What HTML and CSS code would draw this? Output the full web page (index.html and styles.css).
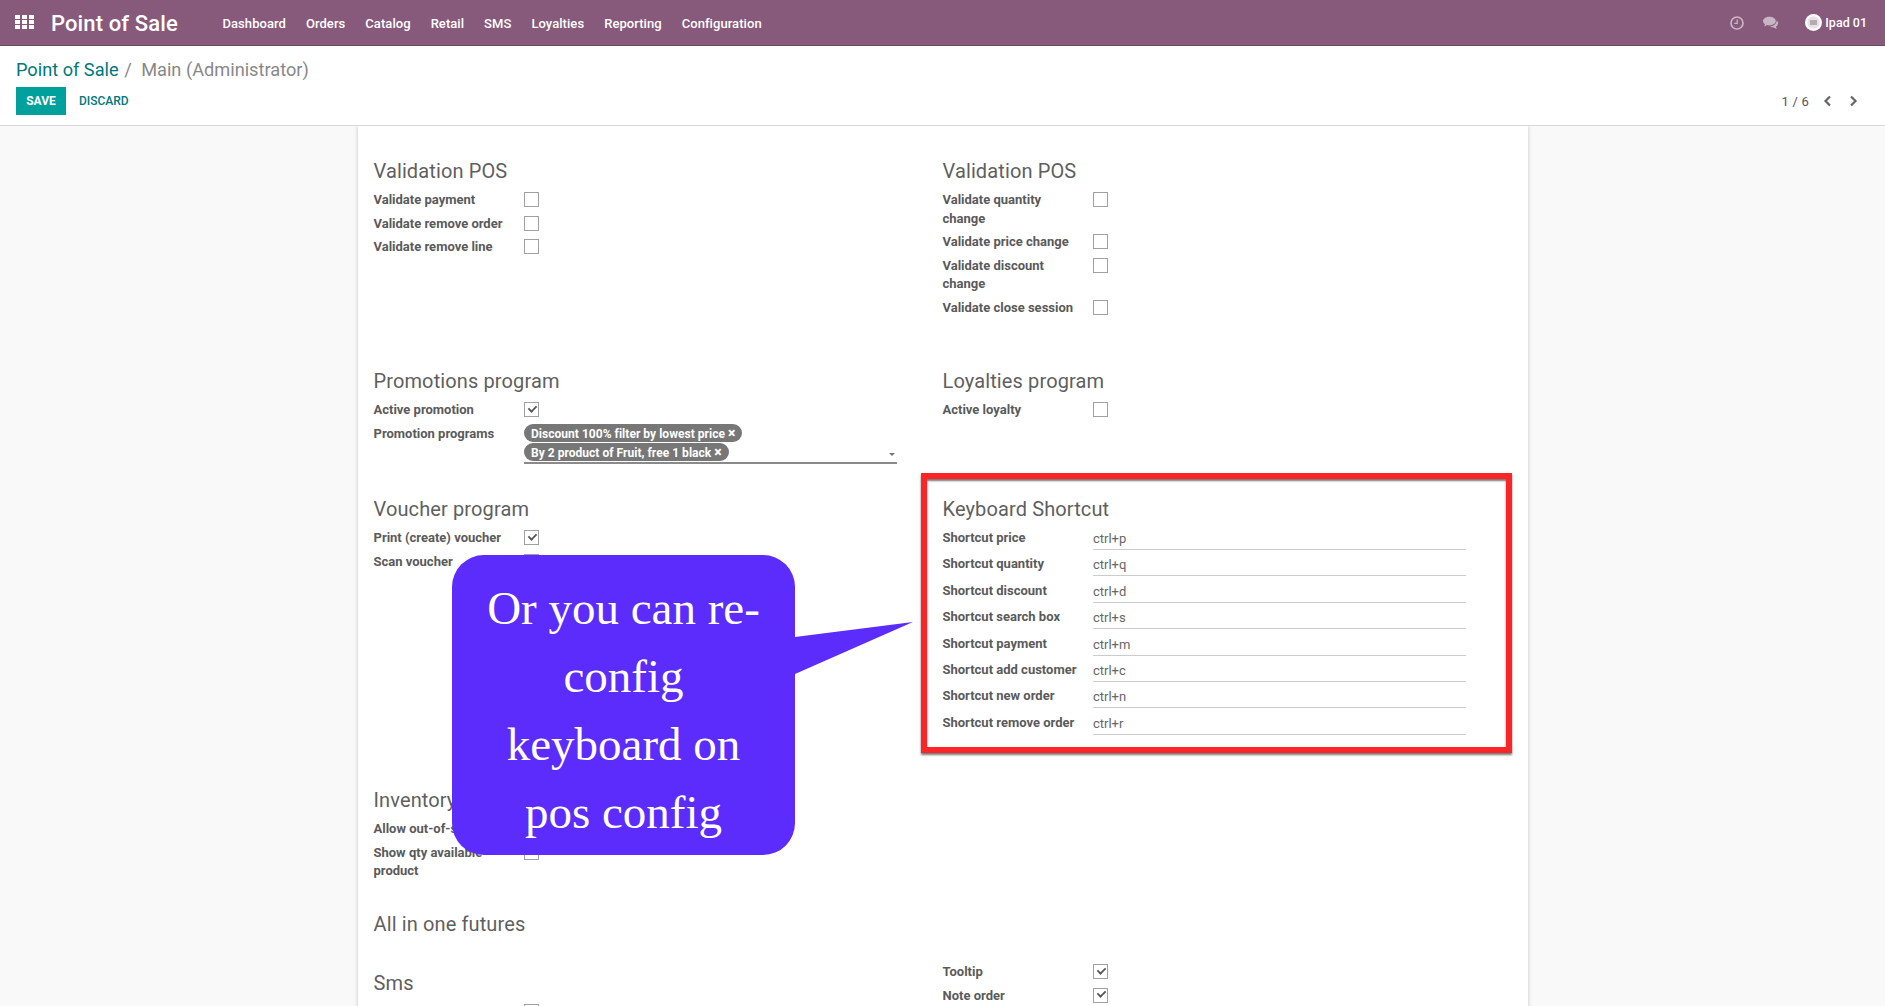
FILE: index.html
```html
<!DOCTYPE html>
<html lang="en">

<head>
    <meta charset="UTF-8">
    <title>Main (Administrator) - Point of Sale</title>
    <link rel="stylesheet" href="styles.css">
</head>

<body>
    <nav class="navbar">
        <svg class="apps-icon" width="19" height="14" viewBox="0 0 19 14" fill="#fff">
            <rect x="0" y="0" width="5" height="4" />
            <rect x="7" y="0" width="5" height="4" />
            <rect x="14" y="0" width="5" height="4" />
            <rect x="0" y="5" width="5" height="4" />
            <rect x="7" y="5" width="5" height="4" />
            <rect x="14" y="5" width="5" height="4" />
            <rect x="0" y="10" width="5" height="4" />
            <rect x="7" y="10" width="5" height="4" />
            <rect x="14" y="10" width="5" height="4" />
        </svg>
        <span class="brand">Point of Sale</span>
        <ul class="menu">
            <li>Dashboard</li>
            <li>Orders</li>
            <li>Catalog</li>
            <li>Retail</li>
            <li>SMS</li>
            <li>Loyalties</li>
            <li>Reporting</li>
            <li>Configuration</li>
        </ul>
        <div class="systray">
            <svg class="tray-icon" width="14" height="14" viewBox="0 0 14 14" fill="none" stroke="#c9b5c4" stroke-width="1.7">
                <circle cx="7" cy="7" r="6" />
                <path d="M7.2 3.4V7.4H4.2" stroke-width="1.3" />
            </svg>
            <svg class="tray-icon" width="16" height="14" viewBox="0 0 16 14" fill="#c9b5c4">
                <path d="M6.5 0.8C3 0.8 0 2.7 0 5.1C0 6.4 0.8 7.5 2 8.3L1.2 10.4L4.1 9.1C4.9 9.3 5.7 9.4 6.5 9.4C10 9.4 12.8 7.5 12.8 5.1C12.8 2.7 10 0.8 6.5 0.8Z" />
                <path d="M13.7 4.4C13.9 6.9 11.5 10 7 10.4C8 11 9.1 11.2 10.2 11.2L13.6 12.9L13 10.6C14.9 9.6 16.3 6.4 13.7 4.4Z" />
            </svg>
            <span class="user">
                <svg class="avatar" width="17" height="17" viewBox="0 0 17 17">
                    <circle cx="8.5" cy="8.5" r="8.5" fill="#fff" />
                    <circle cx="8.5" cy="8.5" r="6.2" fill="#e6e3e5" />
                    <rect x="5" y="6" width="7" height="5" fill="#b5a9b2" />
                </svg>
                Ipad 01
            </span>
        </div>
    </nav>

    <header class="control-panel">
        <div class="breadcrumb">
            <a class="crumb-link">Point of Sale</a>
            <span class="crumb-sep">/</span>
            <span class="crumb-active">Main (Administrator)</span>
        </div>
        <div class="cp-bottom">
            <div class="cp-buttons">
                <button class="btn-save">SAVE</button>
                <button class="btn-discard">DISCARD</button>
            </div>
            <div class="pager">
                <span class="pager-value">1 / 6</span>
                <svg width="9" height="12" viewBox="0 0 9 12" fill="none" stroke="#666" stroke-width="2.2">
                    <path d="M7 1.5L2.5 6L7 10.5" />
                </svg>
                <svg width="9" height="12" viewBox="0 0 9 12" fill="none" stroke="#666" stroke-width="2.2">
                    <path d="M2 1.5L6.5 6L2 10.5" />
                </svg>
            </div>
        </div>
    </header>

    <main class="content">
        <section class="sheet">
            <div class="groups">
                <div class="group">
                    <h2>Validation POS</h2>
                    <div class="field"><label>Validate payment</label><span class="check"></span></div>
                    <div class="field"><label>Validate remove order</label><span class="check"></span></div>
                    <div class="field"><label>Validate remove line</label><span class="check"></span></div>
                </div>
                <div class="group">
                    <h2>Validation POS</h2>
                    <div class="field"><label>Validate quantity change</label><span class="check"></span></div>
                    <div class="field"><label>Validate price change</label><span class="check"></span></div>
                    <div class="field"><label>Validate discount change</label><span class="check"></span></div>
                    <div class="field"><label>Validate close session</label><span class="check"></span></div>
                </div>

                <div class="group">
                    <h2>Promotions program</h2>
                    <div class="field"><label>Active promotion</label><span class="check checked"></span></div>
                    <div class="field">
                        <label>Promotion programs</label>
                        <div class="tags">
                            <span class="tag">Discount 100% filter by lowest price <b class="tag-x">×</b></span>
                            <span class="tag">By 2 product of Fruit, free 1 black <b class="tag-x">×</b></span>
                            <span class="caret"></span>
                        </div>
                    </div>
                </div>
                <div class="group">
                    <h2>Loyalties program</h2>
                    <div class="field"><label>Active loyalty</label><span class="check"></span></div>
                </div>

                <div class="group">
                    <h2>Voucher program</h2>
                    <div class="field"><label>Print (create) voucher</label><span class="check checked"></span></div>
                    <div class="field"><label>Scan voucher</label><span class="check"></span></div>
                </div>
                <div class="group">
                    <h2>Keyboard Shortcut</h2>
                    <div class="shortcut"><label>Shortcut price</label><span class="shortcut-value">ctrl+p</span></div>
                    <div class="shortcut"><label>Shortcut quantity</label><span class="shortcut-value">ctrl+q</span></div>
                    <div class="shortcut"><label>Shortcut discount</label><span class="shortcut-value">ctrl+d</span></div>
                    <div class="shortcut"><label>Shortcut search box</label><span class="shortcut-value">ctrl+s</span></div>
                    <div class="shortcut"><label>Shortcut payment</label><span class="shortcut-value">ctrl+m</span></div>
                    <div class="shortcut"><label>Shortcut add customer</label><span class="shortcut-value">ctrl+c</span></div>
                    <div class="shortcut"><label>Shortcut new order</label><span class="shortcut-value">ctrl+n</span></div>
                    <div class="shortcut"><label>Shortcut remove order</label><span class="shortcut-value">ctrl+r</span></div>
                </div>

                <div class="group">
                    <h2>Inventory</h2>
                    <div class="field"><label>Allow out-of-stock</label><span class="check"></span></div>
                    <div class="field"><label>Show qty available product</label><span class="check"></span></div>
                </div>
                <div class="group"></div>

                <div class="group group-wide">
                    <h2>All in one futures</h2>
                </div>

                <div class="group group-sms">
                    <h2>Sms</h2>
                    <div class="field"><label>Send sms order</label><span class="check"></span></div>
                </div>
                <div class="group group-tools">
                    <div class="field"><label>Tooltip</label><span class="check checked"></span></div>
                    <div class="field"><label>Note order</label><span class="check checked"></span></div>
                </div>
            </div>
        </section>
    </main>

    <!-- annotations drawn over the screenshot -->
    <div class="red-box"></div>
    <div class="callout">
        <svg class="callout-tail" width="120" height="56" viewBox="0 0 120 56">
            <path d="M0 15L118 0L0 52Z" fill="#5b2cfb" />
        </svg>
        <p>Or you can re-<br>config<br>keyboard on<br>pos config</p>
    </div>
</body>

</html>
```

FILE: styles.css
```css
html,
body {
    height: 100%;
}

body {
    margin: 0;
    overflow: hidden;
    position: relative;
    font-family: Roboto, "Liberation Sans", sans-serif;
    font-size: 13px;
    color: #4c4c4c;
    background-color: #fff;
}

.navbar {
    height: 45px;
    border-bottom: 1px solid #6f4a66;
    background-color: #875a7b;
    color: #fff;
    display: flex;
    align-items: center;
    padding: 0 18px 0 15px;
}

.apps-icon {
    flex: none;
    margin-top: -2px;
}

.brand {
    margin-left: 17px;
    padding-top: 1px;
    font-size: 22px;
    font-weight: 500;
    letter-spacing: 0.12px;
}

.menu {
    list-style: none;
    margin: 0 0 0 44.6px;
    padding: 1px 0 0;
    display: flex;
    gap: 20px;
    font-size: 13px;
    font-weight: 500;
    letter-spacing: 0.06px;
}

.systray {
    margin-left: auto;
    display: flex;
    align-items: center;
    gap: 19px;
}

.user {
    margin-left: 7px;
    display: flex;
    align-items: center;
    gap: 3px;
    font-size: 12.5px;
    font-weight: 500;
}

.control-panel {
    height: 79px;
    border-bottom: 1px solid #d9d9d9;
    padding: 0 16px;
    display: flex;
    flex-direction: column;
}

.breadcrumb {
    margin-top: 13px;
    font-size: 18.2px;
    line-height: 22px;
    color: #888;
}

.crumb-link {
    color: #00787a;
}

.crumb-sep {
    margin: 0 5px 0 1px;
}

.cp-bottom {
    margin-top: 6px;
    display: flex;
    justify-content: space-between;
    align-items: center;
}

.cp-buttons {
    display: flex;
    align-items: center;
}

.cp-buttons button {
    font-family: inherit;
    font-size: 12px;
    font-weight: 500;
    border: none;
    height: 28px;
    padding: 0;
    background: none;
}

.cp-buttons .btn-save {
    width: 50px;
    color: #fff;
    background-color: #00a09d;
    font-weight: 700;
}

.btn-discard {
    margin-left: 13px;
    color: #00787a;
}

.pager {
    display: flex;
    align-items: center;
    gap: 17px;
    padding-right: 11px;
    color: #555;
}

.pager-value {
    margin-right: -3px;
    letter-spacing: 0.2px;
}

.content {
    height: 880px;
    background-color: #f9f9f9;
    overflow: hidden;
}

.sheet {
    width: 1170px;
    height: 960px;
    margin-left: 358px;
    background-color: #fff;
    box-shadow: 0 0 4px rgba(0, 0, 0, 0.22);
    padding-top: 31px;
    box-sizing: border-box;
}

.groups {
    display: grid;
    grid-template-columns: 569px 1fr;
    grid-template-rows: 210px 128px 291px 124px 52px;
    padding-left: 15.5px;
}

.group-wide {
    grid-column: 1 / -1;
}

.group-sms {
    padding-top: 7px;
}

h2 {
    margin: 0 0 5px;
    font-size: 20px;
    font-weight: 400;
    line-height: 28px;
    letter-spacing: 0.12px;
    color: #5f5f5f;
}

.field {
    display: flex;
    align-items: flex-start;
    margin-bottom: 4px;
}

label {
    flex: none;
    width: 135px;
    margin-right: 15.5px;
    padding-top: 1px;
    font-size: 13px;
    font-weight: 700;
    line-height: 18.5px;
    color: #5a5a5a;
}

.check {
    flex: none;
    width: 13px;
    height: 13px;
    margin-top: 2px;
    border: 1px solid #a0a0a0;
    background-color: #fff;
    position: relative;
}

.checked::after {
    content: "";
    position: absolute;
    left: 3px;
    top: 1.5px;
    width: 7px;
    height: 4px;
    border-left: 2px solid #555;
    border-bottom: 2px solid #555;
    transform: rotate(-45deg) scale(0.9);
}

.tags {
    width: 373px;
    height: 38px;
    position: relative;
    border-bottom: 2px solid #8a8a8a;
    display: flex;
    flex-direction: column;
    align-items: flex-start;
    gap: 1px;
}

.tag {
    height: 18px;
    line-height: 18px;
    border-radius: 9px;
    padding: 0 7px;
    background-color: #777;
    color: #fff;
    font-size: 12px;
    font-weight: 700;
    letter-spacing: 0.03px;
    white-space: nowrap;
}

.tag-x {
    font-size: 14px;
}

.caret {
    position: absolute;
    right: 2px;
    bottom: 6px;
    border-top: 3px solid #777;
    border-left: 3px solid transparent;
    border-right: 3px solid transparent;
}

.shortcut {
    display: flex;
    align-items: flex-start;
    height: 26.4px;
}

.shortcut label {
    white-space: nowrap;
}

.shortcut-value {
    width: 373px;
    height: 22px;
    line-height: 21.5px;
    border-bottom: 1px solid #ccc;
    color: #666;
    box-sizing: border-box;
}

.red-box {
    position: absolute;
    left: 921px;
    top: 473px;
    width: 591px;
    height: 280px;
    box-sizing: border-box;
    border: 6px solid #fb2427;
    box-shadow: 0 2px 2px #777, inset 0 2px 2px #777;
}

.callout {
    position: absolute;
    left: 452px;
    top: 555px;
    width: 343px;
    height: 300px;
    box-sizing: border-box;
    border-radius: 32px;
    background-color: #5b2cfb;
    color: #fff;
    padding-top: 19px;
    text-align: center;
}

.callout p {
    margin: 0;
    font-family: "Liberation Serif", serif;
    font-size: 47px;
    line-height: 68px;
}

.callout-tail {
    position: absolute;
    left: 343px;
    top: 67px;
}
```
